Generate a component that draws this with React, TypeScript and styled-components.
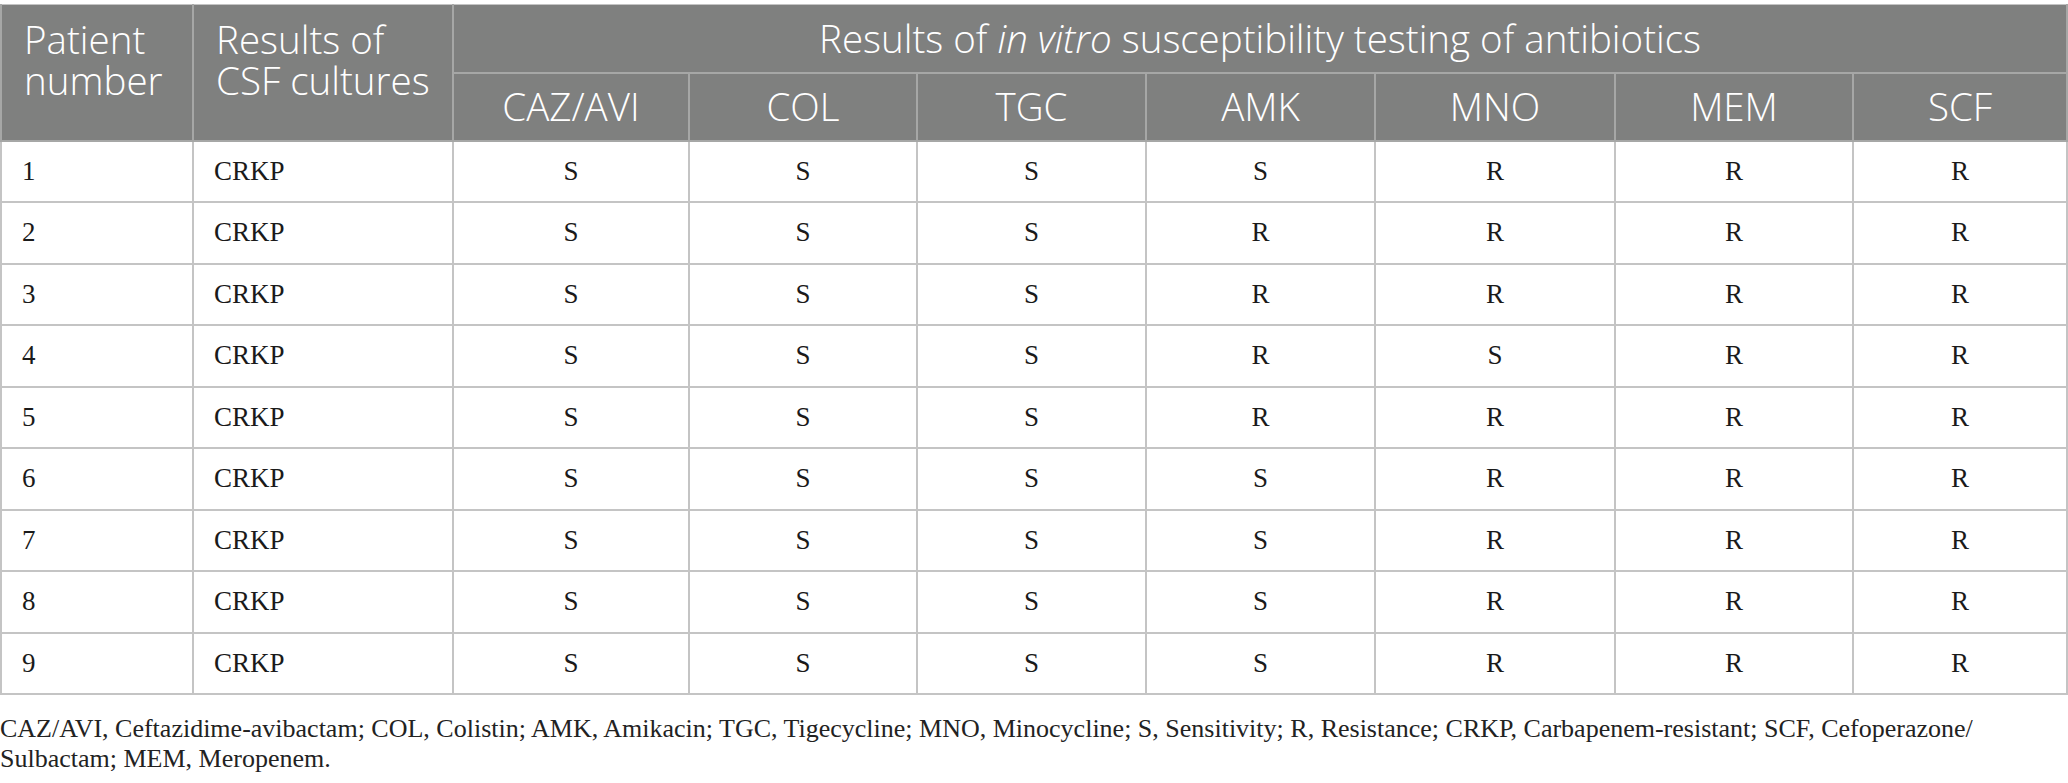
import styled, { createGlobalStyle } from "styled-components";

const GlobalStyle = createGlobalStyle`
  html, body {
    margin: 0;
    padding: 0;
    background: #ffffff;
  }
`;

const drugs = ["CAZ/AVI", "COL", "TGC", "AMK", "MNO", "MEM", "SCF"];
const widths = [192, 260, 236, 228, 229, 229, 240, 238, 214];

const results = [
  ["S", "S", "S", "S", "R", "R", "R"],
  ["S", "S", "S", "R", "R", "R", "R"],
  ["S", "S", "S", "R", "R", "R", "R"],
  ["S", "S", "S", "R", "S", "R", "R"],
  ["S", "S", "S", "R", "R", "R", "R"],
  ["S", "S", "S", "S", "R", "R", "R"],
  ["S", "S", "S", "S", "R", "R", "R"],
  ["S", "S", "S", "S", "R", "R", "R"],
  ["S", "S", "S", "S", "R", "R", "R"],
];

const Page = styled.div`
  width: 2068px;
  padding-top: 4px;
  box-sizing: border-box;
`;

const Table = styled.table`
  width: 2066px;
  table-layout: fixed;
  border-collapse: collapse;
  border-top: 1px solid #c4c4c4;
  border-left: 1px solid #c4c4c4;
  border-right: 2px solid #c4c4c4;
  border-bottom: 2px solid #c4c4c4;
`;

const HeadRow = styled.tr`
  height: 68px;
`;

const HeadCell = styled.th<{ $align?: string; $top?: boolean }>`
  background: #7f807f;
  color: #ffffff;
  font-family: "Open Sans", "Noto Sans", sans-serif;
  font-weight: 300;
  font-size: 38.5px;
  line-height: 41px;
  text-align: ${({ $align }) => $align || "center"};
  vertical-align: ${({ $top }) => ($top ? "top" : "middle")};
  padding: ${({ $top }) => ($top ? "14px 12px 0 22px" : "0 8px")};
  border: 2px solid #a6a7a6;
  border-top: none;
  white-space: nowrap;

  em {
    font-style: italic;
  }
`;

const BodyRow = styled.tr`
  height: 61.5px;
`;

const BodyCell = styled.td<{ $align?: string }>`
  font-family: "Liberation Serif", "Times New Roman", serif;
  font-size: 27px;
  color: #1a1a1a;
  text-align: ${({ $align }) => $align || "center"};
  vertical-align: middle;
  padding: 0 ${({ $align }) => ($align === "left" ? "20px" : "4px")};
  border: 2px solid #c4c4c4;
`;

const Note = styled.p`
  margin: 19px 0 0 0;
  font-family: "Liberation Serif", "Times New Roman", serif;
  font-size: 26px;
  line-height: 30px;
  color: #222222;
`;

export default function App() {
  return (
    <Page>
      <GlobalStyle />
      <Table>
        <colgroup>
          {widths.map((w, i) => (
            <col key={i} style={{ width: w }} />
          ))}
        </colgroup>
        <thead>
          <HeadRow>
            <HeadCell rowSpan={2} $align="left" $top>
              Patient
              <br />
              number
            </HeadCell>
            <HeadCell rowSpan={2} $align="left" $top>
              Results of
              <br />
              CSF cultures
            </HeadCell>
            <HeadCell colSpan={7}>
              Results of <em>in vitro</em> susceptibility testing of antibiotics
            </HeadCell>
          </HeadRow>
          <HeadRow>
            {drugs.map((d) => (
              <HeadCell key={d}>{d}</HeadCell>
            ))}
          </HeadRow>
        </thead>
        <tbody>
          {results.map((row, i) => (
            <BodyRow key={i}>
              <BodyCell $align="left">{i + 1}</BodyCell>
              <BodyCell $align="left">CRKP</BodyCell>
              {row.map((r, j) => (
                <BodyCell key={j}>{r}</BodyCell>
              ))}
            </BodyRow>
          ))}
        </tbody>
      </Table>
      <Note>
        CAZ/AVI, Ceftazidime-avibactam; COL, Colistin; AMK, Amikacin; TGC, Tigecycline; MNO, Minocycline; S,
        Sensitivity; R, Resistance; CRKP, Carbapenem-resistant; SCF, Cefoperazone/
        <wbr />
        Sulbactam; MEM, Meropenem.
      </Note>
    </Page>
  );
}
